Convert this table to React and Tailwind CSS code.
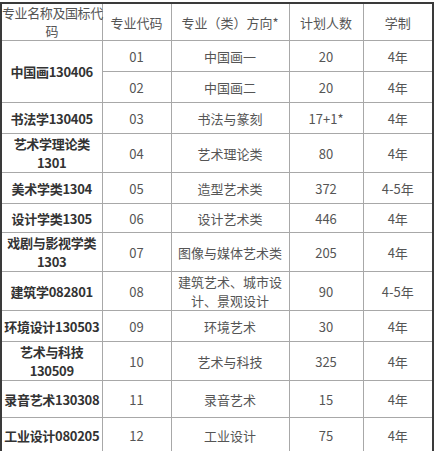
import React from 'react'

const rows = [
  { name: ['中国画130406'], span: 2, code: '01', dir: '中国画一', num: '20', years: '4年', h: 31 },
  { code: '02', dir: '中国画二', num: '20', years: '4年', h: 31 },
  { name: ['书法学130405'], code: '03', dir: '书法与篆刻', num: '17+1*', years: '4年', h: 31 },
  { name: ['艺术学理论类', '1301'], code: '04', dir: '艺术理论类', num: '80', years: '4年', h: 38 },
  { name: ['美术学类1304'], code: '05', dir: '造型艺术类', num: '372', years: '4-5年', h: 31 },
  { name: ['设计学类1305'], code: '06', dir: '设计艺术类', num: '446', years: '4年', h: 29 },
  { name: ['戏剧与影视学类', '1303'], code: '07', dir: '图像与媒体艺术类', num: '205', years: '4年', h: 37 },
  { name: ['建筑学082801'], code: '08', dir: '建筑艺术、城市设计、景观设计', num: '90', years: '4-5年', h: 39 },
  { name: ['环境设计130503'], code: '09', dir: '环境艺术', num: '30', years: '4年', h: 31 },
  { name: ['艺术与科技', '130509'], code: '10', dir: '艺术与科技', num: '325', years: '4年', h: 36 },
  { name: ['录音艺术130308'], code: '11', dir: '录音艺术', num: '15', years: '4年', h: 37 },
  { name: ['工业设计080205'], code: '12', dir: '工业设计', num: '75', years: '4年', h: 37 },
]

const cell = 'border border-[#a8a8a8] text-center align-middle p-0'

export default function App() {
  return (
    <div className="w-[436px] h-[451px] bg-white pt-[2px] font-['Microsoft_YaHei','Noto_Sans_CJK_SC',sans-serif]">
      <table className="table-fixed border-collapse border-2 border-[#3a3a3a] w-[432px] text-[13px] leading-[19px] text-[#555]">
        <colgroup>
          <col className="w-[101px]" />
          <col className="w-[69px]" />
          <col className="w-[118px]" />
          <col className="w-[74px]" />
          <col className="w-[70px]" />
        </colgroup>
        <thead>
          <tr className="h-[37px]">
            <th className={cell + ' font-normal whitespace-nowrap leading-[18px] tracking-[-0.4px]'}>
              专业名称及国标代
              <br />
              码
            </th>
            <th className={cell + ' font-normal'}>专业代码</th>
            <th className={cell + ' font-normal'}>专业（类）方向*</th>
            <th className={cell + ' font-normal'}>计划人数</th>
            <th className={cell + ' font-normal'}>学制</th>
          </tr>
        </thead>
        <tbody>
          {rows.map((r) => (
            <tr key={r.code} style={{ height: r.h }}>
              {r.name && (
                <td rowSpan={r.span || 1} className={cell + ' font-bold text-[#333] whitespace-nowrap tracking-[-0.3px]'}>
                  {r.name.map((line, j) => (
                    <div key={j}>{line}</div>
                  ))}
                </td>
              )}
              <td className={cell}>{r.code}</td>
              <td className={cell + ' px-[6px]'}>{r.dir}</td>
              <td className={cell}>{r.num}</td>
              <td className={cell}>{r.years}</td>
            </tr>
          ))}
        </tbody>
      </table>
    </div>
  )
}
